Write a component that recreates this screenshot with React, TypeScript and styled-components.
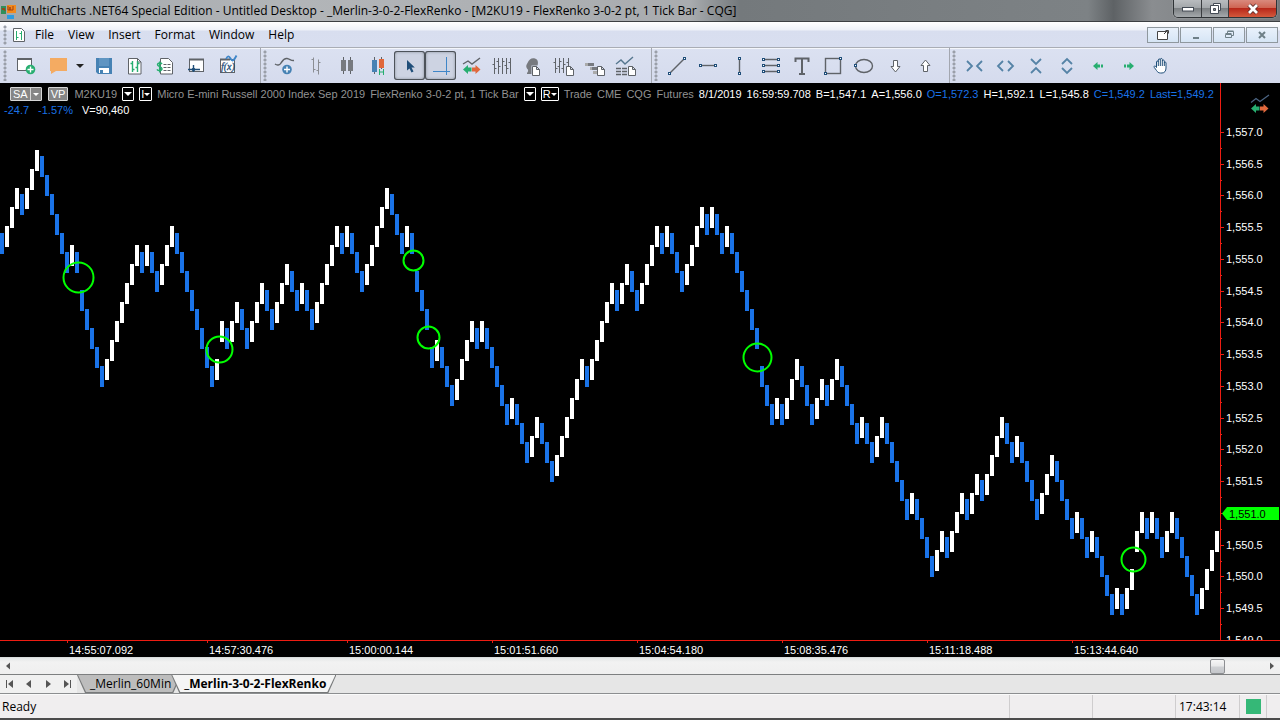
import React from "react";
import styled, { createGlobalStyle } from "styled-components";

const UI = `"Open Sans", "Noto Sans", sans-serif`;
const ARIAL = `"Liberation Sans", Arial, sans-serif`;
const GREY = "#5f6368";
const NAVY = "#1f4e79";
const BLUE = "#4682b4";
const GREEN = "#27ae70";
const ORANGE = "#e0683c";

const GlobalStyle = createGlobalStyle`
  * { box-sizing: border-box; }
  body { margin: 0; background: #efedee; font-family: ${UI}; font-size: 12px; color: #000; }
  button { font: inherit; color: inherit; margin: 0; padding: 0; border: 0; background: none; }
  svg { display: block; }
`;

const Window = styled.div`
  display: flex;
  flex-direction: column;
  min-height: 100vh;
`;

/* ---------- title bar ---------- */
const TitleBar = styled.header`
  display: flex;
  align-items: center;
  height: 22px;
  padding: 0 3px 0 1px;
  gap: 4px;
  border-bottom: 1px solid #3c3f42;
  background: linear-gradient(90deg, #a4a8ab 0, #b2b5b8 300px, #a9acaf 690px, #74797c 740px, #7d8285 85%, #5e6265 87%, #8a8d90 90%, #74787b 100%);
`;
const Title = styled.h1`
  flex: 1;
  margin: 0;
  font-size: 12px;
  font-weight: 400;
  line-height: 20px;
  white-space: nowrap;
  overflow: hidden;
`;
const Caption = styled.div`
  display: flex;
  align-self: flex-start;
  height: 18px;
  border: 1px solid #2f3336;
  border-top: 0;
  border-radius: 0 0 5px 5px;
  overflow: hidden;
  box-shadow: 0 0 1px #fff;
`;
const CaptionButton = styled.button<{ $w: number; $close?: boolean }>`
  width: ${(p) => p.$w}px;
  display: flex;
  align-items: center;
  justify-content: center;
  border-right: ${(p) => (p.$close ? "0" : "1px solid #3a3d40")};
  background: ${(p) =>
    p.$close
      ? "linear-gradient(#d98a7d 0, #cf6553 45%, #b8281a 50%, #d4593c 100%)"
      : "linear-gradient(#b9bcbf 0, #a3a7aa 45%, #7c8083 50%, #a5a9ac 100%)"};
`;

/* ---------- menu bar ---------- */
const MenuBar = styled.nav`
  display: flex;
  align-items: center;
  height: 26px;
  padding: 0 2px 0 3px;
  border-bottom: 1px solid #a9adb5;
  background: linear-gradient(#ffffff 0, #eef1f8 8px, #d8deef 9px, #d9dff0 100%);
`;
const MenuItem = styled.button`
  padding: 0 7px;
  line-height: 24px;
`;
const DocIcon = styled.span`
  width: 16px;
  margin: 0 0 0 2px;
`;
const MdiButtons = styled.div`
  display: flex;
  gap: 1px;
  margin-left: auto;
`;
const MdiButton = styled.button`
  width: 32px;
  height: 16px;
  display: flex;
  align-items: center;
  justify-content: center;
  border: 1px solid #8f989e;
  background: linear-gradient(#e9f1fb, #d6e5f5);
`;

/* ---------- tool bar ---------- */
const ToolBar = styled.div`
  display: flex;
  height: 35px;
  padding-left: 3px;
  overflow: hidden;
  background: linear-gradient(#f4f6fb 0, #f4f6fb 1px, #dbe1f1 1px, #d5dbed 100%);
`;
const ToolGroup = styled.div<{ $end: number; $last?: boolean }>`
  display: flex;
  align-items: center;
  flex: none;
  padding-right: ${(p) => p.$end}px;
  margin-right: 2px;
  border-right: ${(p) => (p.$last ? "0" : "1px solid #a3a7b0")};
`;
const Grip = styled.span<{ $h: number }>`
  width: 7px;
  height: ${(p) => p.$h}px;
  flex: none;
  background: radial-gradient(circle at 2px 2px, #9a9fa9 1px, transparent 2px) 0 0 / 7px 4px repeat-y;
`;
const ToolButton = styled.button<{ $on?: boolean }>`
  width: 31px;
  height: 29px;
  display: flex;
  align-items: center;
  justify-content: center;
  border-radius: 3px;
  box-shadow: ${(p) => (p.$on ? "inset 0 0 0 1px #4d535a, inset 0 0 3px 1px #8b919b" : "none")};
  background: ${(p) => (p.$on ? "#cdd3e2" : "none")};
`;
const Split = styled.div`
  display: flex;
  padding-left: 4px;
`;
const SplitArrow = styled.button`
  width: 12px;
  display: flex;
  align-items: center;
`;

/* ---------- chart ---------- */
const Chart = styled.main`
  flex: 1 0 574px;
  display: grid;
  grid-template-columns: minmax(0, 1fr) 60px;
  grid-template-rows: minmax(557px, 1fr) 17px;
  background: #000;
  overflow: hidden;
`;
const Plot = styled.section`
  position: relative;
  overflow: hidden;
`;
const PlotSvg = styled.svg`
  position: absolute;
  inset: 0;
  width: 100%;
  height: 100%;
`;
const PriceAxis = styled.aside`
  position: relative;
  overflow: hidden;
  border-left: 1px solid #ee1c12;
`;
const TimeAxis = styled.div`
  grid-column: 1 / -1;
  border-top: 1px solid #ee1c12;
  overflow: hidden;
`;
const AxisText = styled.text<{ $dark?: boolean }>`
  fill: ${(p) => (p.$dark ? "#000" : "#fff")};
  font-family: ${ARIAL};
  font-size: 11px;
`;
const Quote = styled.div`
  position: absolute;
  inset: 3px 0 auto 0;
  display: flex;
  flex-wrap: wrap;
  align-items: center;
  column-gap: 5px;
  padding-left: 4px;
  font-family: ${ARIAL};
  font-size: 11px;
  line-height: 16px;
  white-space: nowrap;
`;
const Field = styled.span<{ $c: string; $wide?: boolean }>`
  color: ${(p) => p.$c};
  margin-right: ${(p) => (p.$wide ? 4 : 0)}px;
`;
const Chip = styled.span<{ $first?: boolean }>`
  display: flex;
  margin: 0 1px 0 ${(p) => (p.$first ? 6 : 0)}px;
  height: 14px;
  border: 1px solid #d6d6d6;
  border-radius: 1px;
  background: #868686;
  color: #fff;
  line-height: 12px;
`;
const ChipButton = styled.button`
  display: flex;
  align-items: center;
  padding: 0 2px;
  & + & { border-left: 1px solid #d6d6d6; }
`;
const DropButton = styled.button`
  display: flex;
  align-items: center;
  height: 14px;
  padding: 0 1px;
  border: 1px solid #fff;
  border-radius: 1px;
  color: #fff;
  line-height: 12px;
`;

/* ---------- bottom ---------- */
const ScrollBar = styled.div`
  display: flex;
  align-items: center;
  height: 17px;
  padding: 0 4px;
  border-top: 1px solid #d9dcdc;
  background: linear-gradient(#e4e6e6, #f2f2f2 4px, #efefef);
`;
const ScrollTrack = styled.div`
  flex: 1;
  display: flex;
  justify-content: flex-end;
  padding-right: 41px;
`;
const Thumb = styled.div`
  width: 15px;
  height: 15px;
  border: 1px solid #8d8f92;
  border-radius: 2px;
  background: linear-gradient(#f6f6f6 0, #e8e9ea 45%, #cfd1d4 55%, #c4c6ca 100%);
`;
const TabBar = styled.div`
  display: flex;
  height: 20px;
  border-top: 1px solid #7d7f80;
  border-bottom: 1px solid #8c8e90;
  background: #e6e6e6;
`;
const TabNav = styled.div`
  display: flex;
  width: 77px;
  background: #f0f0f0;
`;
const TabNavButton = styled.button`
  width: 19px;
  display: flex;
  align-items: center;
  justify-content: center;
`;
const Tab = styled.button<{ $active?: boolean }>`
  position: relative;
  isolation: isolate;
  height: 18px;
  padding: 0 10px 0 13px;
  margin-right: -10px;
  line-height: 16px;
  font-weight: ${(p) => (p.$active ? 700 : 400)};
  &::before, &::after {
    content: "";
    position: absolute;
    z-index: -1;
    clip-path: polygon(0 0, 100% 0, calc(100% - 8px) 100%, 8px 100%);
  }
  &::before { inset: 0; background: #77797a; }
  &::after { inset: 0 1px 1px 1px; background: ${(p) => (p.$active ? "#f5f5f5" : "#bdbdbd")}; }
`;
const StatusBar = styled.footer`
  display: flex;
  height: 26px;
  border-top: 1px solid #fafafa;
  border-bottom: 2px solid #4b4b4b;
  background: #f0eeef;
  line-height: 24px;
`;
const StatusCell = styled.div<{ $w?: number }>`
  flex: ${(p) => (p.$w ? `0 0 ${p.$w}px` : "1")};
  display: flex;
  align-items: center;
  padding-left: ${(p) => (p.$w ? 3 : 2)}px;
  border-left: ${(p) => (p.$w ? "1px solid #cfcdce" : "0")};
`;
const Light = styled.span`
  width: 15px;
  height: 15px;
  margin-left: 3px;
  background: #35b877;
`;

/* ---------- icons ---------- */
const Icon = ({ children }: { children: React.ReactNode }) => (
  <svg width="25" height="25" viewBox="0 0 25 25" fill="none" stroke={GREY} aria-hidden="true">
    {children}
  </svg>
);
const Page = ({ x }: { x: number }) => (
  <path d={`M${x}.5 13.5h4l3 3v6h-7zM${x + 4}.5 13.5v3h3`} fill="#fff" />
);
const Node = ({ x, y }: { x: number; y: number }) => (
  <rect x={x - 1} y={y - 1} width="2" height="2" fill="#fff" stroke={NAVY} />
);
const Plus = ({ x, y, c }: { x: number; y: number; c: string }) => (
  <>
    <circle cx={x} cy={y} r="4.8" fill={c} stroke="none" />
    <path d={`M${x - 3} ${y}h6M${x} ${y - 3}v6`} stroke="#fff" strokeWidth="1.4" />
  </>
);
const TradeArrows = () => (
  <>
    <path d="M4 16.500l5-4.500v2.500h3.500v4H9V21z" fill={GREEN} stroke="none" />
    <path d="M21.500 16.500l-5-4.500v2.500H13v4h3.500V21z" fill={ORANGE} stroke="none" />
  </>
);
const Caret = ({ w, c }: { w: number; c: string }) => (
  <svg width={w} height={w / 2} viewBox="0 0 8 4" aria-hidden="true">
    <path d="M0 0h8L4 4z" fill={c} />
  </svg>
);
const Triangle = ({ d }: { d: string }) => (
  <svg width="10" height="10" viewBox="0 0 10 10" aria-hidden="true">
    <path d={d} fill="#555" />
  </svg>
);

type Tool = { name: string; art: React.ReactNode; on?: boolean };

const newTool: Tool = {
  name: "New window",
  art: (
    <>
      <rect x="4.500" y="5.500" width="14" height="12" fill="#fff" />
      <path d="M4 6h15" strokeWidth="2" />
      <Plus x={17.5} y={16.5} c={GREEN} />
    </>
  ),
};
const noteTool: Tool = {
  name: "Note",
  art: <path d="M2 5h17v13H8l-5 3v-3H2z" fill="#f4ab62" stroke="none" />,
};
const fileTools: Tool[] = [
  {
    name: "Save",
    art: (
      <>
        <path d="M5 5h16v16H7l-2-2z" fill={BLUE} stroke="none" />
        <path d="M8 5h10v8H8z" fill="#5f95c2" stroke="none" />
        <path d="M8 15h10v5H8z" fill="#fff" stroke="none" />
        <path d="M9 17h3v3H9z" fill={BLUE} stroke="none" />
      </>
    ),
  },
  {
    name: "Insert instrument",
    art: (
      <>
        <path d="M6.500 5.500h9l3.500 3.500v12H6.500z" fill="#fff" />
        <path d="M15.500 5.500V9H19" />
        <path d="M10.500 8v11M8.500 10.500h2M10.500 16.500h2M15.500 8v11M13.500 14.500h2M15.500 10.500h2" stroke={GREEN} strokeWidth="1.400" />
      </>
    ),
  },
  {
    name: "Quotes",
    art: (
      <>
        <path d="M7.500 5.500h8l4 4v11.500h-12z" fill="#fff" />
        <path d="M10.500 11.500h3M14.500 11.500h3M10.500 14.500h3M14.500 14.500h3M10.500 17.500h3M14.500 17.500h3" />
        <path d="M9 11c-1-1.500-4.500-1.200-4.500.8S9 13.500 9 15.800s-4 2.200-5 .5M6.700 8.500v11" stroke={GREEN} strokeWidth="1.500" />
      </>
    ),
  },
  {
    name: "Trading panel",
    art: (
      <>
        <rect x="5.500" y="6.500" width="14" height="12" fill="#fff" />
        <path d="M5 6.500h15" strokeWidth="2" />
        <path d="M4 16.500h12M9.500 12v7" stroke={NAVY} strokeWidth="1.400" />
        <circle cx="9.500" cy="16.500" r="1.800" fill={NAVY} stroke="none" />
      </>
    ),
  },
  {
    name: "Formula",
    art: (
      <>
        <rect x="5.500" y="6.500" width="14" height="13" fill="#fff" />
        <path d="M5 6.500h10" strokeWidth="2" />
        <text x="6" y="17" fontSize="10" fontStyle="italic" fontFamily="Liberation Serif, serif" fill={NAVY} stroke={NAVY} strokeWidth=".3">f(x)</text>
        <path d="M11 6c1.500-3.500 3-3.500 4.500-.5s3 3 6-3" stroke="#3f86c8" strokeWidth="1.800" />
      </>
    ),
  },
];
const chartTools: Tool[] = [
  {
    name: "Add study",
    art: (
      <>
        <path d="M2 11c2 1.500 4.500 1.500 6-1C10 7 11 5 14 5.500s4 2.500 7 2" strokeWidth="1.400" />
        <Plus x={14} y={16.5} c={BLUE} />
      </>
    ),
  },
  { name: "OHLC bars", art: <path d="M9.500 4.500v15M7.500 6.500h2M9.500 16.500h2M14.500 6.500v15M12.500 17.500h2M14.500 9.500h2" stroke="#8b8e94" /> },
  {
    name: "Candles",
    art: (
      <>
        <path d="M8.500 4v17M15.500 4v17" />
        <path d="M6 7h5v11H6zM13 7h5v11h-5z" fill="#777a7f" stroke="none" />
      </>
    ),
  },
  {
    name: "Heikin candles",
    art: (
      <>
        <path d="M8.500 4v17M15.500 4v12" />
        <path d="M6 7h5v12H6z" fill={BLUE} stroke="none" />
        <path d="M13 6h5v9h-5z" fill={ORANGE} stroke="none" />
        <path d="M13.500 16v6M17.500 16v6M13.500 19h4" stroke={GREEN} />
      </>
    ),
  },
  { name: "Pointer", on: true, art: <path d="M10 7v10.500l2.500-2 2 4 2-1-2-4h3.300z" fill={NAVY} stroke="none" /> },
  { name: "Crosshair", on: true, art: <path d="M18.500 4v18M5 18.500h17" stroke="#3f86c8" /> },
  {
    name: "Trade from chart",
    art: (
      <>
        <path d="M4 11l5-3 4 3 8-6" strokeWidth="1.400" />
        <TradeArrows />
      </>
    ),
  },
  { name: "Bar spacing", art: <path d="M4.500 5v16M8.500 5v16M12.500 5v16M16.500 5v16M20.500 5v16M2.500 11.500h2M4.500 15.500h2M6.500 8.500h2M8.500 13.500h2M12.500 8.500h2M14.500 12.500h2M16.500 15.500h2M18.500 9.500h2" /> },
  {
    name: "Strategy",
    art: (
      <>
        <path d="M6 20c2-2 1-3.500 0-4.500-1.500-2-.5-4 .5-5.500C8 6 11 4.500 14 5.500s3.500 4 2.500 7h-6V21H6z" fill="#777a7f" stroke="none" />
        <Page x={11} />
      </>
    ),
  },
  {
    name: "Format instrument",
    art: (
      <>
        <path d="M3.500 5v15M7.500 5v15M11.500 5v15M16.500 5v8M1.500 9.500h2M3.500 15.500h2M5.500 13.500h2M7.500 8.500h2M9.500 15.500h2M11.500 11.500h2M14.500 9.500h2" />
        <Page x={14} />
      </>
    ),
  },
  {
    name: "Format profile",
    art: (
      <>
        <path d="M2 11.500h3M7 15.500h2" strokeWidth="3" stroke="#aaa" />
        <path d="M5 11.500h6M9 15.500h5" strokeWidth="3" stroke="#777a7f" />
        <path d="M10 19.500h4" strokeWidth="3" stroke="#aaa" />
        <Page x={14} />
      </>
    ),
  },
  {
    name: "Format study",
    art: (
      <>
        <path d="M2 11l5-4 4 4 8-7" stroke="#56778f" strokeWidth="1.400" />
        <path d="M2 15.500h5M8 15.500h5M2 18.500h5M8 18.500h5M2 21.500h5M8 21.500h5" strokeWidth="1.400" />
        <Page x={14} />
      </>
    ),
  },
];
const drawTools: Tool[] = [
  { name: "Trend line", art: <><path d="M5.500 20.500l15-15" strokeWidth="1.400" /><Node x={5.5} y={20.5} /><Node x={20.5} y={5.5} /></> },
  { name: "Horizontal line", art: <><path d="M5 12.500h15" strokeWidth="1.400" /><Node x={5.5} y={12.5} /><Node x={20.5} y={12.5} /></> },
  { name: "Vertical line", art: <><path d="M13.500 5v15" strokeWidth="1.400" /><Node x={13.5} y={5.5} /><Node x={13.5} y={20.5} /></> },
  {
    name: "Levels",
    art: (
      <>
        <path d="M6 6.500h15M6 12.500h15M6 18.500h15" strokeWidth="1.400" />
        {[6.5, 12.5, 18.5].map((y) => (
          <React.Fragment key={y}><Node x={6.5} y={y} /><Node x={21.5} y={y} /></React.Fragment>
        ))}
      </>
    ),
  },
  { name: "Text", art: <path d="M7.500 9V5.500h13V9M14 5.500V21M11 21h6" strokeWidth="2" /> },
  { name: "Rectangle", art: <><rect x="6.500" y="5.500" width="15" height="15" strokeWidth="1.400" /><Node x={6.5} y={20.5} /><Node x={21.5} y={5.5} /></> },
  { name: "Ellipse", art: <><ellipse cx="14" cy="13" rx="8.500" ry="6.500" strokeWidth="1.400" /><Node x={5.5} y={12.5} /></> },
  { name: "Arrow down", art: <path d="M12.500 7.500h4v6h2.500l-4.500 5.500-4.500-5.500h2.500z" fill="#fff" /> },
  { name: "Arrow up", art: <path d="M11.500 18.500h4v-6H18L13.500 7 9 12.500h2.500z" fill="#fff" /> },
];
const viewTools: Tool[] = [
  { name: "Narrow bars", art: <path d="M5 8l5 5-5 5M20 8l-5 5 5 5" stroke="#5583a6" strokeWidth="1.800" /> },
  { name: "Widen bars", art: <path d="M10 8l-5 5 5 5M15 8l5 5-5 5" stroke="#5583a6" strokeWidth="1.800" /> },
  { name: "Shrink scale", art: <path d="M7 6l5 5 5-5M7 20l5-5 5 5" stroke="#5583a6" strokeWidth="1.800" /> },
  { name: "Expand scale", art: <path d="M7 11l5-5 5 5M7 15l5 5 5-5" stroke="#5583a6" strokeWidth="1.800" /> },
  { name: "Scroll left", art: <path d="M7 13l4.500-4v2.500H14v3h-2.500V17zM15 11.500h2v3h-2z" fill={GREEN} stroke="none" /> },
  { name: "Scroll right", art: <path d="M17 13l-4.500-4v2.500H10v3h2.500V17zM7 11.500h2v3H7z" fill={GREEN} stroke="none" /> },
  {
    name: "Hand",
    art: <path d="M8.500 14.500V9c0-1.300 1.800-1.300 1.800 0V7c0-1.400 2-1.400 2 0v-.5c0-1.400 2-1.400 2 0V8c0-1.300 2-1.300 2 0v2c0-1.300 1.700-1.300 1.700 0v5c0 3-1.500 5-4 5h-1.500c-2 0-3-1-4-2.500l-2.300-3.200c-.6-1 .6-1.800 1.300-1.100zM10.300 9v4M12.300 7v6M14.300 8v5M16.300 10v3" fill="#fff" stroke={NAVY} />,
  },
];

const Tools = ({ items }: { items: Tool[] }) => (
  <>
    {items.map((t) => (
      <ToolButton key={t.name} aria-label={t.name} $on={t.on}>
        <Icon>{t.art}</Icon>
      </ToolButton>
    ))}
  </>
);

/* ---------- data ---------- */
// Signed run lengths of up and down bricks; two runs of one sign in a row have a gap between them.
const RUNS = [
  -1, 3, -1, 3, -6, 1, -1, -5, 7, -1, 1, -2, 3, -8, 1, 1, -1, 2, -2, 3, -2, 3, -2, 1, -2, 5, -1, 1, -3, 5,
  -3, 1, -1, -3, -1, 1, -3, 4, -1, 1, -5, 1, -3, 2, -3, 6, -1, 5, -1, 2, -2, 4, -1, 1, -3, 4, -1, 1, -2, 1,
  -6, -3, 1, -1, 3, -3, 2, -1, 2, -4, 1, -2, 2, -5, 1, -4, 2, -1, 3, -1, 2, -1, 4, -2, 1, -4, 3, -4, 1, -2,
  1, -4, 1, -1, 2, 2, -1, 1, -2, 2, -5, 4,
];
const TICK = 6.347;
const yOf = (price: number) => 49 + (1557 - price) * TICK * 10;

const bricks: { up: boolean; y: number }[] = [];
let level = 15554;
RUNS.forEach((run, r) => {
  const dir = Math.sign(run);
  for (let i = 0; i < Math.abs(run); i++) {
    if (r > 0) {
      const gap = i === 0 && Math.sign(RUNS[r - 1]) === dir;
      const turn = i === 0 && !gap;
      level += dir * (gap ? 6 : turn ? 1 : 3);
    }
    bricks.push({ up: dir > 0, y: Math.round(yOf(level / 10)) - 1 });
  }
});

const CIRCLES = [
  [78.5, 194.5, 15], [219.5, 266.5, 13], [413.5, 177.5, 10], [428.5, 254.5, 11], [757.5, 274.5, 14], [1133.5, 476.5, 12],
];
const LAST = 1551;
const PRICES = Array.from({ length: 17 }, (_, i) => 1557 - i * 0.5);
const TIMES: [number, string][] = [
  [67, "14:55:07.092"], [207, "14:57:30.476"], [347, "15:00:00.144"], [492, "15:01:51.660"],
  [637, "15:04:54.180"], [782, "15:08:35.476"], [927, "15:11:18.488"], [1072, "15:13:44.640"],
];
const DIM = "#929292";
const SKY = "#1a73e8";
const fields: [string, string, boolean?][] = [
  ["Trade", DIM], ["CME", DIM], ["CQG", DIM], ["Futures", DIM], ["8/1/2019", "#fff"], ["16:59:59.708", "#fff"],
  ["B=1,547.1", "#fff"], ["A=1,556.0", "#fff"], ["O=1,572.3", SKY], ["H=1,592.1", "#fff"], ["L=1,545.8", "#fff"],
  ["C=1,549.2", SKY], ["Last=1,549.2", SKY], ["-24.7", SKY, true], ["-1.57%", SKY, true], ["V=90,460", "#fff"],
];
const price = (p: number) => p.toLocaleString("en-US", { minimumFractionDigits: 1 });

export default function App() {
  return (
    <Window>
      <GlobalStyle />
      <TitleBar>
        <svg width="16" height="16" viewBox="0 0 16 16" aria-hidden="true">
          <path d="M0 3h5v8H0z" fill="#2f8f5b" />
          <path d="M6 2h9v8H6z" fill="#f28a1c" />
          <path d="M6 12h7v4H6z" fill="#2d9be0" />
          <path d="M1 5l1 2 1-2 1 3M7 3v4h2V4v3h3V3" stroke="#a33e10" fill="none" />
        </svg>
        <Title>MultiCharts .NET64 Special Edition - Untitled Desktop - _Merlin-3-0-2-FlexRenko - [M2KU19 - FlexRenko 3-0-2 pt, 1 Tick Bar - CQG]</Title>
        <Caption>
          <CaptionButton $w={28} aria-label="Minimize">
            <svg width="12" height="6" aria-hidden="true"><rect x=".5" y="1.500" width="11" height="3.500" fill="#fff" stroke="#444b55" /></svg>
          </CaptionButton>
          <CaptionButton $w={27} aria-label="Restore">
            <svg width="13" height="13" fill="#fff" stroke="#444b55" aria-hidden="true">
              <path d="M4.500 1.500h7v7h-7z" /><path d="M1.500 3.500h8v8h-8z" /><path d="M4.500 6.500h2v2h-2z" fill="#8b8f93" />
            </svg>
          </CaptionButton>
          <CaptionButton $w={47} $close aria-label="Close">
            <svg width="12" height="12" aria-hidden="true">
              <path d="M2 2l8 8M10 2l-8 8" stroke="#5a2a28" strokeWidth="4.500" />
              <path d="M2 2l8 8M10 2l-8 8" stroke="#fff" strokeWidth="2.800" />
            </svg>
          </CaptionButton>
        </Caption>
      </TitleBar>

      <MenuBar>
        <Grip $h={20} />
        <DocIcon>
          <svg width="14" height="16" viewBox="0 0 14 16" fill="none" stroke={GREY} aria-hidden="true">
            <path d="M1.500 1.500h8l3 3v10h-11z" fill="#fff" />
            <path d="M4.500 4v9M4.500 10.500h2M9.500 4v9M7.500 6.500h2" stroke={GREEN} />
          </svg>
        </DocIcon>
        {["File", "View", "Insert", "Format", "Window", "Help"].map((m) => (
          <MenuItem key={m}>{m}</MenuItem>
        ))}
        <MdiButtons>
          <MdiButton aria-label="Detach">
            <svg width="14" height="12" fill="none" stroke="#444" aria-hidden="true">
              <path d="M1.500 2.500h10v8h-10z" fill="#fff" /><path d="M8 5l4-4M9.500 1.500h3v3" />
            </svg>
          </MdiButton>
          <MdiButton aria-label="Minimize chart">
            <svg width="8" height="8" aria-hidden="true"><path d="M1 6h6v2H1z" fill="#6f8088" /></svg>
          </MdiButton>
          <MdiButton aria-label="Restore chart">
            <svg width="9" height="9" fill="none" stroke="#6f8088" aria-hidden="true">
              <path d="M2.500 3V1.500h6v4H7" /><path d="M2.500 1h6" /><path d="M.5 4.500h6v3h-6zM.5 3.500h6" />
            </svg>
          </MdiButton>
          <MdiButton aria-label="Close chart">
            <svg width="8" height="8" aria-hidden="true"><path d="M1 1l6 6M7 1L1 7" stroke="#6f8088" strokeWidth="2" /></svg>
          </MdiButton>
        </MdiButtons>
      </MenuBar>

      <ToolBar>
        <ToolGroup $end={17}>
          <Grip $h={31} />
          <Tools items={[newTool]} />
          <Split>
            <Tools items={[noteTool]} />
            <SplitArrow aria-label="Note options"><Caret w={8} c="#222" /></SplitArrow>
          </Split>
          <Tools items={fileTools} />
        </ToolGroup>
        <ToolGroup $end={9}><Grip $h={31} /><Tools items={chartTools} /></ToolGroup>
        <ToolGroup $end={9}><Grip $h={31} /><Tools items={drawTools} /></ToolGroup>
        <ToolGroup $end={9} $last><Grip $h={31} /><Tools items={viewTools} /></ToolGroup>
      </ToolBar>

      <Chart>
        <Plot>
          <PlotSvg role="img" aria-label="M2KU19 FlexRenko chart">
            <g shapeRendering="crispEdges">
              {bricks.map((b, i) => (
                <rect key={i} x={i * 5} y={b.y} width="4" height="21" fill={b.up ? "#fff" : SKY} />
              ))}
            </g>
            {CIRCLES.map(([x, y, r]) => (
              <circle key={x} cx={x} cy={y} r={r} fill="none" stroke="#0f0" strokeWidth="2" />
            ))}
          </PlotSvg>
          <Quote>
            <Chip $first>
              <ChipButton>SA</ChipButton>
              <ChipButton aria-label="SA options"><Caret w={6} c="#fff" /></ChipButton>
            </Chip>
            <Chip><ChipButton>VP</ChipButton></Chip>
            <Field $c={DIM}>M2KU19</Field>
            <DropButton aria-label="Symbol"><Caret w={8} c="#fff" /></DropButton>
            <DropButton>I<Caret w={6} c="#fff" /></DropButton>
            <Field $c={DIM}>Micro E-mini Russell 2000 Index Sep 2019</Field>
            <Field $c={DIM}>FlexRenko 3-0-2 pt, 1 Tick Bar</Field>
            <DropButton aria-label="Resolution"><Caret w={8} c="#fff" /></DropButton>
            <DropButton>R<Caret w={6} c="#fff" /></DropButton>
            {fields.map(([text, c, wide]) => (
              <Field key={text} $c={c} $wide={wide}>{text}</Field>
            ))}
          </Quote>
        </Plot>

        <PriceAxis>
          <PlotSvg role="img" aria-label="Price scale">
            {PRICES.map((p) => {
              const y = Math.round(yOf(p));
              return (
                <g key={p}>
                  <path d={`M0 ${y + 0.5}h3M0 ${y + 16.5}h1`} stroke="#ee1c12" />
                  {p !== LAST && <AxisText x="5" y={y + 4}>{price(p)}</AxisText>}
                </g>
              );
            })}
            <path d="M1 430.500l5-6.500h52v13H6z" fill="#0f0" />
            <AxisText $dark x="8" y="435">{price(LAST)}</AxisText>
            <svg x="26" y="9" width="25" height="25" viewBox="0 0 25 25" fill="none">
              <path d="M4 10.500l5-4 4 3 9-6.500" stroke="#4c6584" strokeWidth="1.200" />
              <TradeArrows />
            </svg>
          </PlotSvg>
        </PriceAxis>

        <TimeAxis>
          <svg width="100%" height="16" role="img" aria-label="Time scale">
            {TIMES.map(([x, t]) => (
              <g key={t}>
                <path d={`M${x + 0.5} 0v2`} stroke="#ee1c12" />
                <AxisText x={x + 2} y="13">{t}</AxisText>
              </g>
            ))}
          </svg>
        </TimeAxis>
      </Chart>

      <ScrollBar>
        <button aria-label="Scroll back"><Triangle d="M6 1.500v7L2 5z" /></button>
        <ScrollTrack><Thumb /></ScrollTrack>
        <button aria-label="Scroll forward"><Triangle d="M4 1.500v7l4-3.500z" /></button>
      </ScrollBar>

      <TabBar>
        <TabNav>
          <TabNavButton aria-label="First tab"><Triangle d="M1 1h1v8H1zM8 1v8L3 5z" /></TabNavButton>
          <TabNavButton aria-label="Previous tab"><Triangle d="M7 1v8L2 5z" /></TabNavButton>
          <TabNavButton aria-label="Next tab"><Triangle d="M3 1v8l5-4z" /></TabNavButton>
          <TabNavButton aria-label="Last tab"><Triangle d="M2 1v8l5-4zM8 1h1v8H8z" /></TabNavButton>
        </TabNav>
        <Tab>_Merlin_60Min</Tab>
        <Tab $active>_Merlin-3-0-2-FlexRenko</Tab>
      </TabBar>

      <StatusBar>
        <StatusCell>Ready</StatusCell>
        <StatusCell $w={83} />
        <StatusCell $w={83} />
        <StatusCell $w={64}>17:43:14</StatusCell>
        <StatusCell $w={27}><Light /></StatusCell>
        <StatusCell $w={14} />
      </StatusBar>
    </Window>
  );
}
